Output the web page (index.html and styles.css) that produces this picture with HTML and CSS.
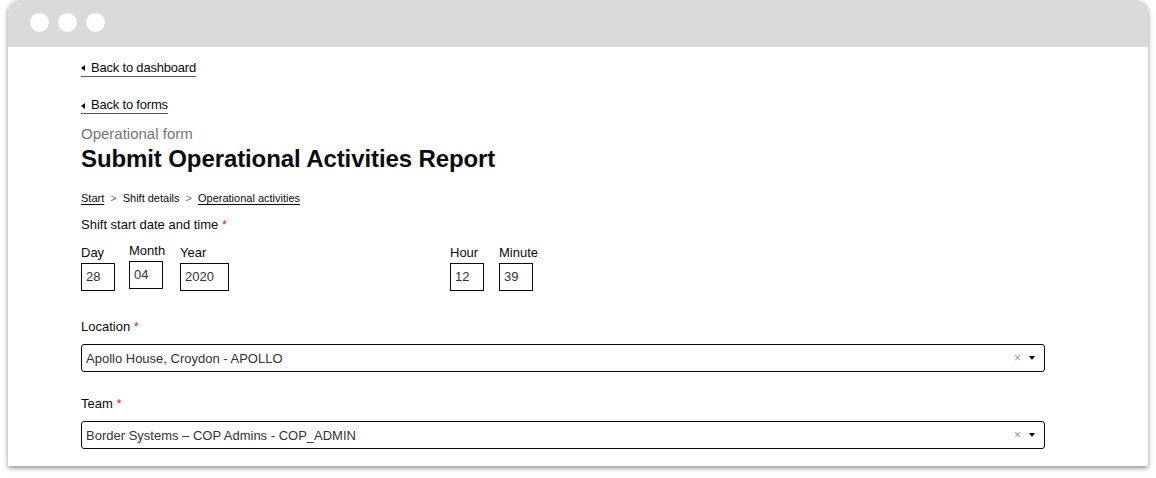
FILE: index.html
```html
<!DOCTYPE html>
<html lang="en">
<head>
<meta charset="utf-8">
<title>Submit Operational Activities Report</title>
<link rel="stylesheet" href="styles.css">
</head>
<body>
<div class="window">
  <div class="titlebar">
    <span class="dot"></span><span class="dot"></span><span class="dot"></span>
  </div>
  <div class="content">
    <div class="back back-first"><a class="back-link" href="#"><span class="tri"></span>Back to dashboard</a></div>
    <div class="back back-second"><a class="back-link" href="#"><span class="tri"></span>Back to forms</a></div>
    <div class="caption">Operational form</div>
    <h1 class="title">Submit Operational Activities Report</h1>
    <nav class="crumbs">
      <a href="#" class="crumb-link">Start</a>
      <span class="chev">&gt;</span>
      <span class="crumb">Shift details</span>
      <span class="chev">&gt;</span>
      <a href="#" class="crumb-link">Operational activities</a>
    </nav>
    <div class="label label-shift">Shift start date and time <span class="req">*</span></div>
    <div class="datetime">
      <div class="date-group">
        <div class="field field-day">
          <div class="sub-label">Day</div>
          <div class="box box-2">28</div>
        </div>
        <div class="field field-month">
          <div class="sub-label">Month</div>
          <div class="box box-2">04</div>
        </div>
        <div class="field field-year">
          <div class="sub-label">Year</div>
          <div class="box box-4">2020</div>
        </div>
      </div>
      <div class="time-group">
        <div class="field field-hour">
          <div class="sub-label">Hour</div>
          <div class="box box-2">12</div>
        </div>
        <div class="field field-minute">
          <div class="sub-label">Minute</div>
          <div class="box box-2">39</div>
        </div>
      </div>
    </div>
    <div class="label label-location">Location <span class="req">*</span></div>
    <div class="select">
      <span class="select-value">Apollo House, Croydon - APOLLO</span>
      <span class="select-clear">×</span>
      <span class="select-arrow"></span>
    </div>
    <div class="label label-team">Team <span class="req">*</span></div>
    <div class="select">
      <span class="select-value">Border Systems – COP Admins - COP_ADMIN</span>
      <span class="select-clear">×</span>
      <span class="select-arrow"></span>
    </div>
  </div>
</div>
</body>
</html>
```
FILE: styles.css
```css
* { box-sizing: border-box; }
html, body { margin: 0; padding: 0; background: #ffffff; }
body {
  font-family: "Liberation Sans", Arial, sans-serif;
  color: #0b0c0c;
  width: 1156px;
  height: 478px;
  overflow: hidden;
}
.window {
  margin-left: 8px;
  width: 1140px;
  border-radius: 12px 12px 0 0;
  background: #ffffff;
  box-shadow: 0 2px 5px rgba(0, 0, 0, 0.45);
  overflow: hidden;
}
.titlebar {
  height: 47px;
  background: #dadada;
  display: flex;
  align-items: center;
  gap: 9px;
  padding-left: 22px;
  padding-bottom: 3px;
}
.dot {
  width: 19px;
  height: 19px;
  border-radius: 50%;
  background: #ffffff;
}
.content {
  padding: 12px 0 17px 73px;
}
.back { font-size: 13px; line-height: 16px; letter-spacing: -0.2px; }
.back-second { margin-top: 20px; }
.back-link {
  display: inline-flex;
  align-items: center;
  color: #0b0c0c;
  text-decoration: none;
  border-bottom: 1px solid #505a5f;
  height: 17px;
}
.tri {
  width: 0;
  height: 0;
  border-top: 3px solid transparent;
  border-bottom: 3px solid transparent;
  border-right: 4px solid #0b0c0c;
  margin-right: 6px;
  margin-top: 1px;
}
.caption {
  margin-top: 11px;
  font-size: 15px;
  line-height: 18px;
  color: #6f777b;
}
.title {
  margin: 3px 0 0 0;
  font-size: 24px;
  line-height: 26px;
  font-weight: 700;
  letter-spacing: -0.1px;
}
.crumbs {
  margin-top: 19px;
  font-size: 11px;
  line-height: 14px;
  display: flex;
  gap: 5px;
}
.crumb-link { color: #0b0c0c; text-decoration: underline; text-underline-offset: 2px; }
.chev { color: #6f777b; margin: 0 1px; }
.label {
  font-size: 13px;
  line-height: 16px;
}
.req { color: #d4351c; }
.label-shift { margin-top: 12px; }
.datetime {
  display: flex;
  margin-top: 12px;
  gap: 221px;
}
.date-group, .time-group { display: flex; }
.date-group { gap: 14px; }
.field { flex: none; }
.field-day, .field-month, .field-hour, .field-minute { width: 34px; }
.field-year { width: 49px; margin-left: 3px; }
.field-month { margin-top: -2px; }
.time-group { gap: 15px; }
.sub-label { font-size: 13px; line-height: 16px; margin-bottom: 2px; white-space: nowrap; }
.box {
  height: 28px;
  border: 1.5px solid #0b0c0c;
  font-size: 13px;
  line-height: 25px;
  padding-left: 4px;
  color: #333;
}
.box-2 { width: 34px; }
.box-4 { width: 49px; }
.label-location { margin-top: 28px; }
.label-team { margin-top: 24px; }
.select {
  margin-top: 9px;
  width: 964px;
  height: 28px;
  border: 1.5px solid #0b0c0c;
  border-radius: 3px;
  display: flex;
  align-items: center;
  padding: 0 9px 0 4px;
  font-size: 13px;
  color: #333;
}
.select-value { flex: 1; }
.select-clear { color: #999; font-size: 12px; margin-right: 8px; }
.select-arrow {
  width: 0;
  height: 0;
  border-left: 3px solid transparent;
  border-right: 3px solid transparent;
  border-top: 4px solid #0b0c0c;
}
```
